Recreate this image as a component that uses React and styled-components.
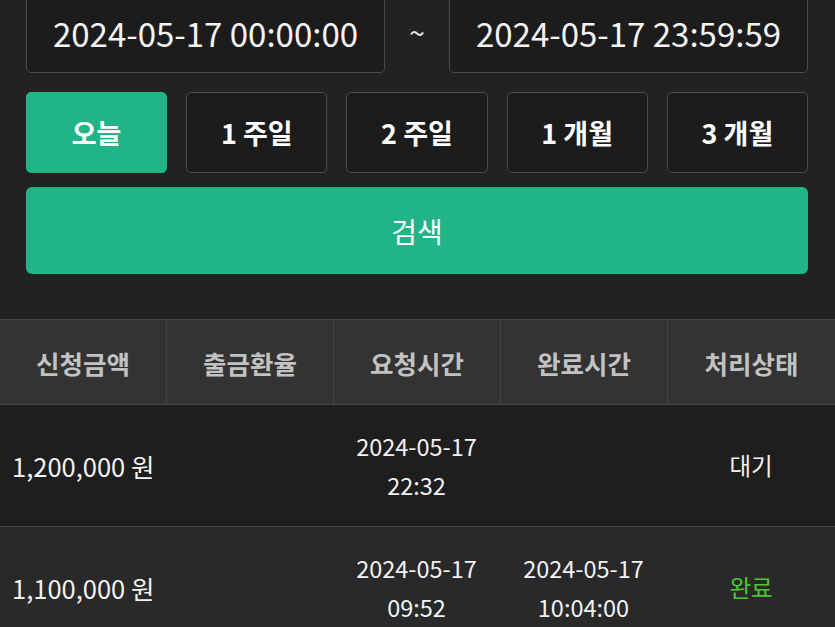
import React from "react";
import styled, { createGlobalStyle } from "styled-components";

const Global = createGlobalStyle`
  html, body { margin: 0; padding: 0; background: #222222; }
  body { font-family: "Noto Sans CJK KR", "Noto Sans", sans-serif; color: #fff; overflow: hidden; }
`;

const Page = styled.div`
  width: 835px;
  height: 627px;
  overflow: hidden;
  background: #222222;
`;

const Form = styled.div`
  padding: 0 27px 0 26px;
  margin-top: -13px;
  display: flex;
  flex-direction: column;
`;

const DateRow = styled.div`
  display: flex;
  align-items: center;
`;

const DateBox = styled.div`
  flex: 1;
  height: 86px;
  box-sizing: border-box;
  border: 1.5px solid #4a4a4a;
  border-radius: 5px;
  background: #1c1c1c;
  display: flex;
  align-items: center;
  justify-content: center;
  font-size: 33px;
  color: #f4f4f4;
  padding-top: 5px;
`;

const Tilde = styled.div`
  width: 64px;
  text-align: center;
  font-size: 28px;
  color: #e0e0e0;
  padding-top: 4px;
`;

const RangeRow = styled.div`
  margin-top: 19px;
  display: grid;
  grid-template-columns: repeat(5, 1fr);
  gap: 19px;
`;

const RangeBtn = styled.div`
  height: 81px;
  box-sizing: border-box;
  border-radius: 5px;
  border: 1.5px solid ${(p) => (p.$active ? "#20b486" : "#4a4a4a")};
  background: ${(p) => (p.$active ? "#20b486" : "#1c1c1c")};
  display: flex;
  align-items: center;
  justify-content: center;
  font-size: 27px;
  font-weight: 700;
  color: #fff;
`;

const SearchBtn = styled.div`
  margin-top: 14px;
  height: 87px;
  border-radius: 6px;
  background: #20b486;
  display: flex;
  align-items: center;
  justify-content: center;
  font-size: 28px;
  color: #fff;
`;

const Table = styled.div`
  margin-top: 45px;
  display: flex;
  flex-direction: column;
`;

const Row = styled.div`
  display: grid;
  grid-template-columns: 166px 167px 167px 167px 1fr;
  height: ${(p) => p.$h}px;
  background: ${(p) => p.$bg};
  border-top: 1.5px solid #444;
  box-sizing: border-box;
`;

const HeadCell = styled.div`
  display: flex;
  align-items: center;
  justify-content: center;
  font-size: 25.5px;
  font-weight: 700;
  color: #c2c2c2;
  border-left: ${(p) => (p.$first ? "none" : "1.5px solid #444")};
`;

const Cell = styled.div`
  display: flex;
  flex-direction: column;
  align-items: ${(p) => (p.$left ? "flex-start" : "center")};
  justify-content: center;
  padding-left: ${(p) => (p.$left ? "12px" : "0")};
  font-size: ${(p) => (p.$left ? "25.5px" : "23.5px")};
  line-height: 39px;
  color: ${(p) => p.$color || "#f2f2f2"};
`;

const headers = ["신청금액", "출금환율", "요청시간", "완료시간", "처리상태"];

const rows = [
  {
    amount: "1,200,000 원",
    req: ["2024-05-17", "22:32"],
    done: null,
    status: "대기",
    statusColor: "#f2f2f2",
    bg: "#1e1e1e",
  },
  {
    amount: "1,100,000 원",
    req: ["2024-05-17", "09:52"],
    done: ["2024-05-17", "10:04:00"],
    status: "완료",
    statusColor: "#4cc733",
    bg: "#292929",
  },
];

export default function App() {
  return (
    <Page>
      <Global />
      <Form>
        <DateRow>
          <DateBox>2024-05-17 00:00:00</DateBox>
          <Tilde>~</Tilde>
          <DateBox>2024-05-17 23:59:59</DateBox>
        </DateRow>
        <RangeRow>
          <RangeBtn $active>오늘</RangeBtn>
          <RangeBtn>1 주일</RangeBtn>
          <RangeBtn>2 주일</RangeBtn>
          <RangeBtn>1 개월</RangeBtn>
          <RangeBtn>3 개월</RangeBtn>
        </RangeRow>
        <SearchBtn>검색</SearchBtn>
      </Form>
      <Table>
        <Row $h={85} $bg="#333333">
          {headers.map((h, i) => (
            <HeadCell key={h} $first={i === 0}>{h}</HeadCell>
          ))}
        </Row>
        {rows.map((r, i) => (
          <Row key={i} $h={122} $bg={r.bg}>
            <Cell $left>{r.amount}</Cell>
            <Cell />
            <Cell>
              {r.req.map((t) => <span key={t}>{t}</span>)}
            </Cell>
            <Cell>
              {r.done && r.done.map((t) => <span key={t}>{t}</span>)}
            </Cell>
            <Cell $color={r.statusColor}>{r.status}</Cell>
          </Row>
        ))}
      </Table>
    </Page>
  );
}
